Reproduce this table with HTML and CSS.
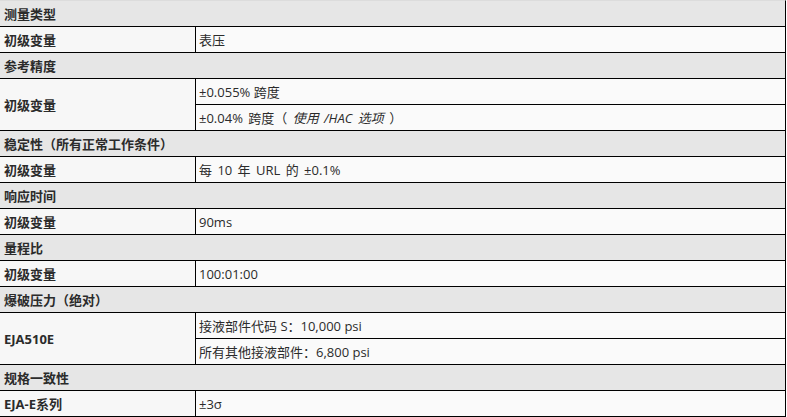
FILE: index.html
```html
<!DOCTYPE html>
<html lang="zh">
<head>
<meta charset="utf-8">
<link rel="stylesheet" href="styles.css">
</head>
<body>
<table class="spec">
<tbody>
<tr class="head"><td colspan="2">测量类型</td></tr>
<tr><td class="label">初级变量</td><td class="val">表压</td></tr>
<tr class="head"><td colspan="2">参考精度</td></tr>
<tr><td class="label" rowspan="2">初级变量</td><td class="val">±0.055% 跨度</td></tr>
<tr><td class="val wide">±0.04% 跨度（ <em>使用 /HAC 选项</em> ）</td></tr>
<tr class="head"><td colspan="2">稳定性（所有正常工作条件）</td></tr>
<tr><td class="label">初级变量</td><td class="val wide">每 10 年 URL 的 ±0.1%</td></tr>
<tr class="head"><td colspan="2">响应时间</td></tr>
<tr><td class="label">初级变量</td><td class="val">90ms</td></tr>
<tr class="head"><td colspan="2">量程比</td></tr>
<tr><td class="label">初级变量</td><td class="val">100:01:00</td></tr>
<tr class="head"><td colspan="2">爆破压力（绝对）</td></tr>
<tr><td class="label" rowspan="2">EJA510E</td><td class="val">接液部件代码 S：10,000 psi</td></tr>
<tr><td class="val">所有其他接液部件：6,800 psi</td></tr>
<tr class="head"><td colspan="2">规格一致性</td></tr>
<tr><td class="label">EJA-E系列</td><td class="val">±3σ</td></tr>
</tbody>
</table>
</body>
</html>
```
FILE: styles.css
```css
html, body {
  margin: 0;
  padding: 0;
  background: #ffffff;
}
.spec {
  width: 786px;
  border-collapse: separate;
  border-spacing: 0;
  border-top: 1px solid #dcdcdc;
  border-right: 1px solid #000;
  font-family: "Open Sans", "Noto Sans CJK SC", sans-serif;
  font-size: 13px;
  color: #2b2b2b;
}
.spec td {
  height: 25px;
  padding: 0 0 0 4px;
  box-sizing: content-box;
  border-bottom: 1px solid #000;
  vertical-align: middle;
  line-height: 18px;
  white-space: nowrap;
}
.spec tr.head td {
  background: #e6e6e6;
  font-weight: bold;
}
.spec td.label {
  width: 191px;
  background: #f7f7f7;
  font-weight: bold;
  border-right: 1px solid #000;
}
.spec td.val {
  background: #fafafa;
  padding-left: 3px;
}
.spec td.wide {
  word-spacing: 2px;
}
.spec em {
  font-style: italic;
}
```
